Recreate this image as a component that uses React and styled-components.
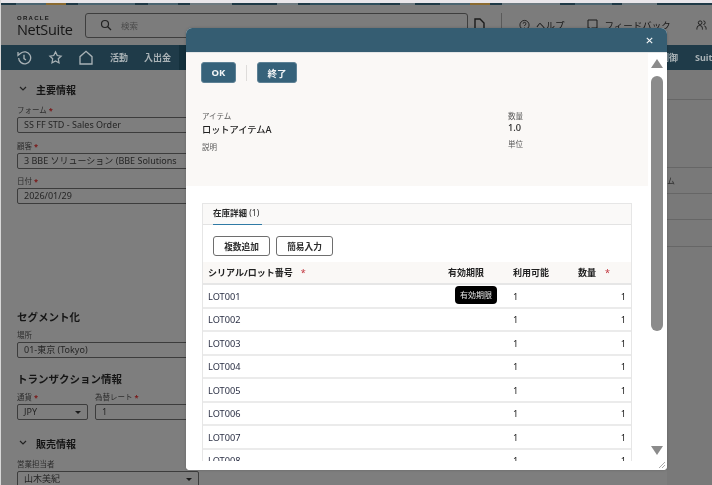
import React from 'react';
import styled, { createGlobalStyle } from 'styled-components';

const Global = createGlobalStyle`
  html, body { margin: 0; padding: 0; background: #7d7d7d; }
  * { box-sizing: border-box; }
  body { font-family: "Noto Sans", "Noto Sans CJK JP", sans-serif; }
`;

const Page = styled.div`
  position: relative; width: 712px; height: 485px; overflow: hidden;
  background: #7d7d7d; color: #1b1b1b; display: flex; flex-direction: column;
  filter: blur(0.45px);
`;
const TopEdge = styled.div`
  height: 3px; background: #e9e6ea; flex: none;
`;
const Ribbon = styled.div`
  height: 2px; flex: none;
  background: linear-gradient(90deg,#1e3946 0 16px,#4a6470 16px 46px,#8a6a30 46px 66px,#1e3946 66px 78px,#4a6470 78px 135px,#1e3946 135px 148px,#4a6470 148px 178px,#1e3946 178px 190px,#6e7a80 190px 232px,#1e3946 232px 277px,#6e7a80 277px 298px,#1e3946 298px 310px,#2e4e5c 310px 380px,#1e3946 380px 400px,#6e7a80 400px 415px,#1e3946 415px 440px,#4a6470 440px 470px,#8a6a30 470px 490px,#1e3946 490px 502px,#6e7a80 502px 560px,#1e3946 560px 575px,#4a6470 575px 612px,#1e3946 612px 622px,#6e7a80 622px 657px,#1e3946 657px 712px);
`;
const Header = styled.header`
  height: 40px; flex: none; display: flex; align-items: center; padding-left: 17px; background: #7c7c7c;
`;
const Logo = styled.div`
  width: 68px; display: flex; flex-direction: column; color: #161616; margin-top: 2px;
`;
const LogoTop = styled.span`
  font: 700 6px/7px "Liberation Sans", sans-serif; letter-spacing: 1.3px;
`;
const LogoMain = styled.span`
  font: 400 14.5px/15px "Open Sans", sans-serif; letter-spacing: -0.3px;
`;
const Search = styled.div`
  width: 383px; height: 25px; border: 1px solid #3e3e3e; border-radius: 3px; display: flex; align-items: center;
  padding-left: 14px; gap: 9px; font-size: 8.5px; color: #4b4b4b;
`;
const HeadRight = styled.div`
  display: flex; align-items: center; margin-left: 6px; font-size: 9.5px; color: #181818; white-space: nowrap;
`;
const Sep = styled.div`
  width: 1px; height: 25px; background: #5a5a5a; margin: 0 17px 0 16px;
`;
const HeadItem = styled.div`
  display: flex; align-items: center; gap: ${p => p.$gap || 5}px; margin-right: ${p => p.$mr || 0}px; font-size: 9.5px;
`;
const Nav = styled.nav`
  height: 25px; flex: none; background: #1f3b49; display: flex; align-items: center; color: #a9b2b6;
  font-size: 9px; font-weight: 700; padding-left: 16px; overflow: hidden;
`;
const NavIcon = styled.div`
  width: 16px; height: 16px; margin-right: ${p => p.$mr}px; display: flex; color: #a9b2b6;
`;
const NavText = styled.span`
  margin-right: ${p => p.$mr || 0}px; flex: none;
`;
const NavActive = styled.div`
  width: 479px; height: 25px; background: #14303c; flex: none; margin-right: 2px;
`;
const Content = styled.div`
  flex: 1; display: flex; background: #7e7e7e; min-height: 0;
`;
const Form = styled.div`
  width: 667px; flex: none; padding: 12px 0 0 17px; display: flex; flex-direction: column;
`;
const RightCol = styled.div`
  flex: 1; display: flex; flex-direction: column; background: #797979;
`;
const RightRow = styled.div`
  height: ${p => p.$h}px; border-bottom: 1px solid #666; flex: none; font-size: 8px; color: #2e2e2e; display: flex; align-items: center;
`;
const SectionHead = styled.div`
  display: flex; align-items: center; gap: 9px; font-size: 10px; font-weight: 700; color: #151515; height: 14px; padding-left: 2px;
  margin-top: ${p => p.$mt || 0}px;
`;
const PlainHead = styled.div`
  font-size: 10.5px; font-weight: 700; color: #151515; height: 14px; line-height: 14px; margin-top: ${p => p.$mt || 0}px;
`;
const Label = styled.div`
  font-size: 7.5px; line-height: 10px; color: #2d2d2d; height: 10px; margin-top: ${p => p.$mt || 0}px; white-space: nowrap;
`;
const Req = styled.span`
  color: #7a1515; margin-left: 2px; font-weight: 700;
`;
const Input = styled.div`
  height: 16px; width: ${p => p.$w || 240}px; margin-top: 2px; border: 1px solid #3c3c3c; border-radius: 2px;
  font-size: 9px; line-height: 14px; padding: 0 6px; color: #252525; white-space: nowrap; overflow: hidden;
  display: flex; align-items: center; justify-content: space-between; flex: none;
`;
const Caret = styled.span`
  width: 0; height: 0; border-left: 3px solid transparent; border-right: 3px solid transparent; border-top: 3px solid #1a1a1a;
`;
const Pair = styled.div`
  display: flex; gap: 7px;
`;
const PairCol = styled.div`
  display: flex; flex-direction: column; width: ${p => p.$w}px; flex: none;
`;
const LeftEdge = styled.div`
  position: absolute; left: 0; top: 0; width: 1px; height: 100%;
  background: #d8d8d8;
`;
const Modal = styled.div`
  position: absolute; left: 186px; top: 28px; width: 481px; height: 442px; background: #fff; border-radius: 6px 6px 4px 4px;
  display: flex; flex-direction: column; overflow: hidden; box-shadow: 0 0 3px rgba(0,0,0,.2);
`;
const ModalHead = styled.div`
  height: 24px; flex: none; background: #355d72; display: flex; align-items: center; justify-content: flex-end; padding-right: 13px; color: #f2f4f5;
`;
const ModalBody = styled.div`
  flex: 1; min-height: 0; display: flex; background: #fff; border-top: 1px solid #e4e6e7;
`;
const Scroller = styled.div`
  flex: 1; min-width: 0; display: flex; flex-direction: column; overflow: hidden; padding-bottom: 9px;
`;
const Summary = styled.div`
  height: 133px; flex: none; background: #faf8f6; padding: 9px 0 0 15px; width: 462px;
`;
const Toolbar = styled.div`
  display: flex; align-items: center; height: 21px;
`;
const PrimaryBtn = styled.button`
  height: 21px; width: ${p => p.$w}px; background: #36627a; color: #f4f6f7; border: 1px solid #5d8195; border-radius: 3px;
  font: 700 9.5px "Noto Sans", "Noto Sans CJK JP", sans-serif; padding: 0; flex: none;
`;
const VLine = styled.div`
  width: 1px; height: 16px; background: #dedcda; margin: 0 10px;
`;
const Fields = styled.div`
  display: grid; grid-template-columns: 306px 1fr; margin-top: 28px; padding-left: 1px;
`;
const FieldCol = styled.div`
  display: flex; flex-direction: column;
`;
const SmallLabel = styled.div`
  font-size: 7.5px; line-height: 10px; color: #5a5a5a; margin-top: ${p => p.$mt || 0}px;
`;
const Value = styled.div`
  font-size: 9.2px; line-height: 12px; color: #222; font-weight: 500; margin-top: ${p => p.$mt || 0}px;
`;
const Panel = styled.div`
  margin: 17px 0 0 16px; width: 430px; border: 1px solid #e6e6e6; border-bottom: 0; flex: 1; min-height: 0; overflow: hidden;
  display: flex; flex-direction: column; position: relative;
`;
const Tabs = styled.div`
  height: 21px; flex: none; background: #faf9f8; border-bottom: 1px solid #e3e3e3; padding-left: 10px; display: flex;
`;
const Tab = styled.div`
  height: 21px; width: 49px; border-bottom: 1px solid #2f7aa5; font-size: 8.5px; font-weight: 700; line-height: 17px; color: #2b2b2b; white-space: nowrap;
`;
const TabCount = styled.span`
  font-weight: 400;
`;
const Actions = styled.div`
  height: 37px; flex: none; padding: 11px 0 0 10px; display: flex; gap: 6px;
`;
const OutlineBtn = styled.button`
  width: 57px; height: 20px; border: 1px solid #6e6e6e; border-radius: 3px; background: #fff; color: #2c2c2c; padding: 0;
  font: 700 8.7px "Noto Sans", "Noto Sans CJK JP", sans-serif;
`;
const TableHead = styled.div`
  height: 23px; flex: none; display: grid; grid-template-columns: 240px 65px 65px 1fr; align-items: center; background: #faf8f6;
  border-bottom: 2px solid #e6e6e6; font-size: 9px; font-weight: 700; color: #222; padding-left: 5px; white-space: nowrap;
`;
const TableRow = styled.div`
  height: 23.5px; flex: none; display: grid; grid-template-columns: 305px 65px 1fr; align-items: center; border-bottom: 2px solid #ebebeb;
  font-size: 9.2px; color: #2b3045; padding: 1px 0 0 5px;
`;
const Qty = styled.span`
  text-align: right; padding-right: 5px; color: #222;
`;
const Avail = styled.span`
  color: #222;
`;
const Star = styled.span`
  color: #c0303a; margin-left: ${p => p.$ml}px; font-weight: 400;
`;
const Tooltip = styled.div`
  position: absolute; left: 252px; top: 82px; width: 42px; height: 18px; background: #000; border-radius: 4px; color: #e8e8e8;
  font-size: 8px; line-height: 18px; text-align: center;
`;
const ScrollTrack = styled.div`
  width: 12px; margin: 6px 4px 0 0; flex: none; display: flex; flex-direction: column; align-items: center;
`;
const ArrowUp = styled.div`
  width: 0; height: 0; border-left: 6px solid transparent; border-right: 6px solid transparent; border-bottom: 9px solid #8b8b8b; flex: none;
`;
const ArrowDown = styled(ArrowUp)`
  border-bottom: 0; border-top: 9px solid #8b8b8b; margin-top: 115px;
`;
const Thumb = styled.div`
  width: 12px; height: 255px; background: #8b8b8b; border-radius: 6px; margin-top: 8px; flex: none;
`;
const Grip = styled.svg`
  position: absolute; right: 2px; bottom: 2px; width: 7px; height: 7px;
`;
const Doc = styled.svg`
  flex: none;
`;

const rows = ['LOT001','LOT002','LOT003','LOT004','LOT005','LOT006','LOT007','LOT008'];

export default function App() {
  return (
    <Page>
      <Global />
      <TopEdge />
      <Ribbon />
      <Header>
        <Logo>
          <LogoTop>ORACLE</LogoTop>
          <LogoMain>NetSuite</LogoMain>
        </Logo>
        <Search>
          <svg width="12" height="12" viewBox="0 0 24 24" fill="none" stroke="#222" strokeWidth="2.4"><circle cx="10" cy="10" r="7"/><path d="M15.5 15.5 22 22"/></svg>
          検索
        </Search>
        <HeadRight>
          <Doc width="11" height="14" viewBox="0 0 11 14" fill="none" stroke="#1a1a1a" strokeWidth="1.4"><path d="M1 13V1h5l4 4v8"/></Doc>
          <Sep />
          <HeadItem $gap={6} $mr={22}>
            <svg width="11" height="12" viewBox="0 0 24 24" fill="none" stroke="#1a1a1a" strokeWidth="2"><circle cx="12" cy="12" r="10"/><path d="M9 9a3 3 0 1 1 4 3l-1 2M12 17v1"/></svg>
            ヘルプ
          </HeadItem>
          <HeadItem $gap={7} $mr={25}>
            <svg width="11" height="12" viewBox="0 0 22 24" fill="none" stroke="#1a1a1a" strokeWidth="2"><path d="M2 2h18v16H9l-3 3v-3H2z"/></svg>
            フィードバック
          </HeadItem>
          <svg width="11" height="12" viewBox="0 0 24 24" fill="none" stroke="#1a1a1a" strokeWidth="2"><circle cx="9" cy="7" r="4"/><path d="M2 22v-3a6 6 0 0 1 12 0v3M16 3a4 4 0 0 1 0 8M18 14a5 5 0 0 1 4 5v3"/></svg>
        </HeadRight>
      </Header>
      <Nav>
        <NavIcon $mr={16}><svg width="16" height="16" viewBox="0 0 24 24" fill="none" stroke="currentColor" strokeWidth="2"><path d="M4 12a9 9 0 1 0 3-7L3 8V3M12 7v6l3 2"/></svg></NavIcon>
        <NavIcon $mr={15}><svg width="15" height="15" viewBox="0 0 24 24" fill="none" stroke="currentColor" strokeWidth="2"><path d="m12 3 2.8 5.8 6.2.9-4.500 4.400 1.100 6.300L12 17.400l-5.600 3 1.100-6.300L3 9.700l6.200-.9z"/></svg></NavIcon>
        <NavIcon $mr={16}><svg width="16" height="16" viewBox="0 0 24 24" fill="none" stroke="currentColor" strokeWidth="2"><path d="M3 21V10l9-8 9 8v11z"/></svg></NavIcon>
        <NavText $mr={16}>活動</NavText>
        <NavText $mr={8}>入出金</NavText>
        <NavActive />
        <NavText $mr={17}>制御</NavText>
        <NavText>Suite</NavText>
      </Nav>
      <Content>
        <Form>
          <SectionHead>
            <svg width="8" height="6" viewBox="0 0 8 6" fill="none" stroke="#222" strokeWidth="1.2"><path d="m1 1 3 3 3-3"/></svg>
            主要情報
          </SectionHead>
          <Label $mt={9}>フォーム<Req>*</Req></Label>
          <Input>SS FF STD - Sales Order</Input>
          <Label $mt={7.5}>顧客<Req>*</Req></Label>
          <Input>3 BBE ソリューション (BBE Solutions</Input>
          <Label $mt={7.5}>日付<Req>*</Req></Label>
          <Input>2026/01/29</Input>
          <PlainHead $mt={106}>セグメント化</PlainHead>
          <Label $mt={6}>場所</Label>
          <Input>01-東京 (Tokyo)</Input>
          <PlainHead $mt={14}>トランザクション情報</PlainHead>
          <Pair>
            <PairCol $w={71}>
              <Label $mt={6}>通貨<Req>*</Req></Label>
              <Input $w={71}>JPY<Caret /></Input>
            </PairCol>
            <PairCol $w={200}>
              <Label $mt={6}>為替レート<Req>*</Req></Label>
              <Input $w={200}>1</Input>
            </PairCol>
          </Pair>
          <SectionHead $mt={16}>
            <svg width="8" height="6" viewBox="0 0 8 6" fill="none" stroke="#222" strokeWidth="1.2"><path d="m1 1 3 3 3-3"/></svg>
            販売情報
          </SectionHead>
          <Label $mt={9}>営業担当者</Label>
          <Input $w={182}>山木美紀<Caret /></Input>
        </Form>
        <RightCol>
          <RightRow $h={30} />
          <RightRow $h={68} />
          <RightRow $h={26}>ム</RightRow>
          <RightRow $h={26} />
          <RightRow $h={27} />
        </RightCol>
      </Content>
      <LeftEdge />
      <Modal>
        <ModalHead>
          <svg width="9" height="9" viewBox="0 0 10 10" fill="none" stroke="currentColor" strokeWidth="1.3"><path d="m2 2 6 6M8 2 2 8"/></svg>
        </ModalHead>
        <ModalBody>
          <Scroller>
            <Summary>
              <Toolbar>
                <PrimaryBtn $w={35}>OK</PrimaryBtn>
                <VLine />
                <PrimaryBtn $w={40}>終了</PrimaryBtn>
              </Toolbar>
              <Fields>
                <FieldCol>
                  <SmallLabel>アイテム</SmallLabel>
                  <Value $mt={3}>ロットアイテムA</Value>
                  <SmallLabel $mt={6}>説明</SmallLabel>
                </FieldCol>
                <FieldCol>
                  <SmallLabel>数量</SmallLabel>
                  <Value $mt={1}>1.0</Value>
                  <SmallLabel $mt={5}>単位</SmallLabel>
                </FieldCol>
              </Fields>
            </Summary>
            <Panel>
              <Tabs><Tab>在庫詳細 <TabCount>(1)</TabCount></Tab></Tabs>
              <Actions>
                <OutlineBtn>複数追加</OutlineBtn>
                <OutlineBtn>簡易入力</OutlineBtn>
              </Actions>
              <TableHead>
                <span>シリアル/ロット番号<Star $ml={8}>*</Star></span>
                <span>有効期限</span>
                <span>利用可能</span>
                <span>数量<Star $ml={9}>*</Star></span>
              </TableHead>
              {rows.map(r => (
                <TableRow key={r}>
                  <span>{r}</span>
                  <Avail>1</Avail>
                  <Qty>1</Qty>
                </TableRow>
              ))}
              <Tooltip>有効期限</Tooltip>
            </Panel>
          </Scroller>
          <ScrollTrack>
            <ArrowUp />
            <Thumb />
            <ArrowDown />
          </ScrollTrack>
        </ModalBody>
        <Grip viewBox="0 0 7 7" stroke="#aaa" strokeWidth="1"><path d="M1 7 7 1M4 7l3-3"/></Grip>
      </Modal>
    </Page>
  );
}
